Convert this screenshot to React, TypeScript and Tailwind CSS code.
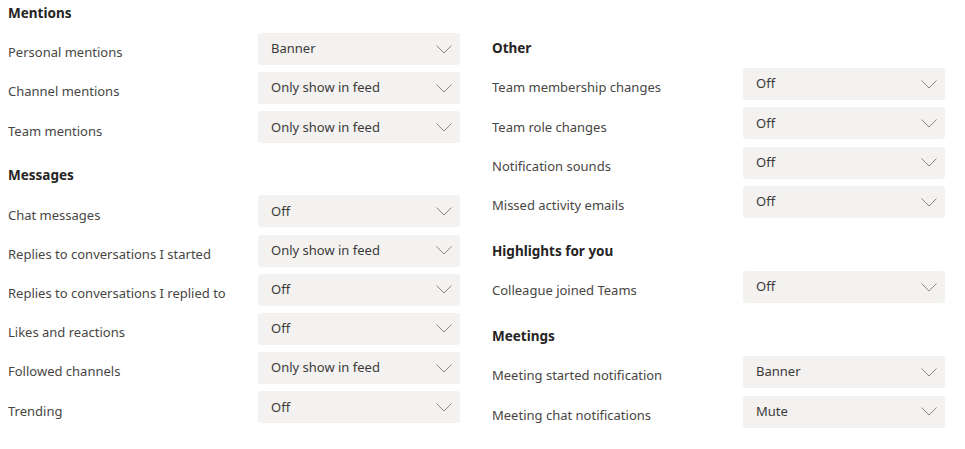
type Setting = { label: string; value: string }
type Section = { title: string; items: Setting[] }

const LEFT: Section[] = [
  {
    title: 'Mentions',
    items: [
      { label: 'Personal mentions', value: 'Banner' },
      { label: 'Channel mentions', value: 'Only show in feed' },
      { label: 'Team mentions', value: 'Only show in feed' },
    ],
  },
  {
    title: 'Messages',
    items: [
      { label: 'Chat messages', value: 'Off' },
      { label: 'Replies to conversations I started', value: 'Only show in feed' },
      { label: 'Replies to conversations I replied to', value: 'Off' },
      { label: 'Likes and reactions', value: 'Off' },
      { label: 'Followed channels', value: 'Only show in feed' },
      { label: 'Trending', value: 'Off' },
    ],
  },
]

const RIGHT: Section[] = [
  {
    title: 'Other',
    items: [
      { label: 'Team membership changes', value: 'Off' },
      { label: 'Team role changes', value: 'Off' },
      { label: 'Notification sounds', value: 'Off' },
      { label: 'Missed activity emails', value: 'Off' },
    ],
  },
  {
    title: 'Highlights for you',
    items: [{ label: 'Colleague joined Teams', value: 'Off' }],
  },
  {
    title: 'Meetings',
    items: [
      { label: 'Meeting started notification', value: 'Banner' },
      { label: 'Meeting chat notifications', value: 'Mute' },
    ],
  },
]

// thin, wide chevron like the Fluent dropdown
function Chevron() {
  return (
    <svg width="16" height="9" viewBox="0 0 16 9" fill="none" className="shrink-0">
      <polyline points="0.5,0.5 8,8 15.5,0.5" stroke="#8a8886" strokeWidth="1" />
    </svg>
  )
}

function Dropdown({ value }: { value: string }) {
  return (
    <button className="flex h-8 w-[202px] items-center justify-between rounded-[3px] bg-[#f3f2f1] pl-[13px] pr-[8px] text-left text-[#3b3a39]">
      <span>{value}</span>
      <Chevron />
    </button>
  )
}

function SettingsColumn({ sections, tight }: { sections: Section[]; tight?: boolean }) {
  return (
    <div className={tight ? 'flex w-[452px] flex-col' : 'flex w-[453px] flex-col'}>
      {sections.map((section, i) => (
        <div key={section.title} className={i > 0 ? (tight ? 'mt-[22px]' : 'mt-[23px]') : ''}>
          <h3 className="mb-[10px] text-[13.5px] leading-5 font-bold text-[#252423]">
            {section.title}
          </h3>
          <div className={tight ? 'flex flex-col gap-[7.2px]' : 'flex flex-col gap-[7.4px]'}>
            {section.items.map((item) => (
              <div key={item.label} className="flex h-8 items-center justify-between">
                <span className="mt-2 text-[#484644]">{item.label}</span>
                <Dropdown value={item.value} />
              </div>
            ))}
          </div>
        </div>
      ))}
    </div>
  )
}

export default function App() {
  return (
    <div className="min-h-screen bg-white font-['Noto_Sans',sans-serif] text-[13px]">
      <div className="flex gap-8 pl-2">
        <div className="pt-[3px]">
          <SettingsColumn sections={LEFT} tight />
        </div>
        <div className="pt-[38px]">
          <SettingsColumn sections={RIGHT} />
        </div>
      </div>
    </div>
  )
}
